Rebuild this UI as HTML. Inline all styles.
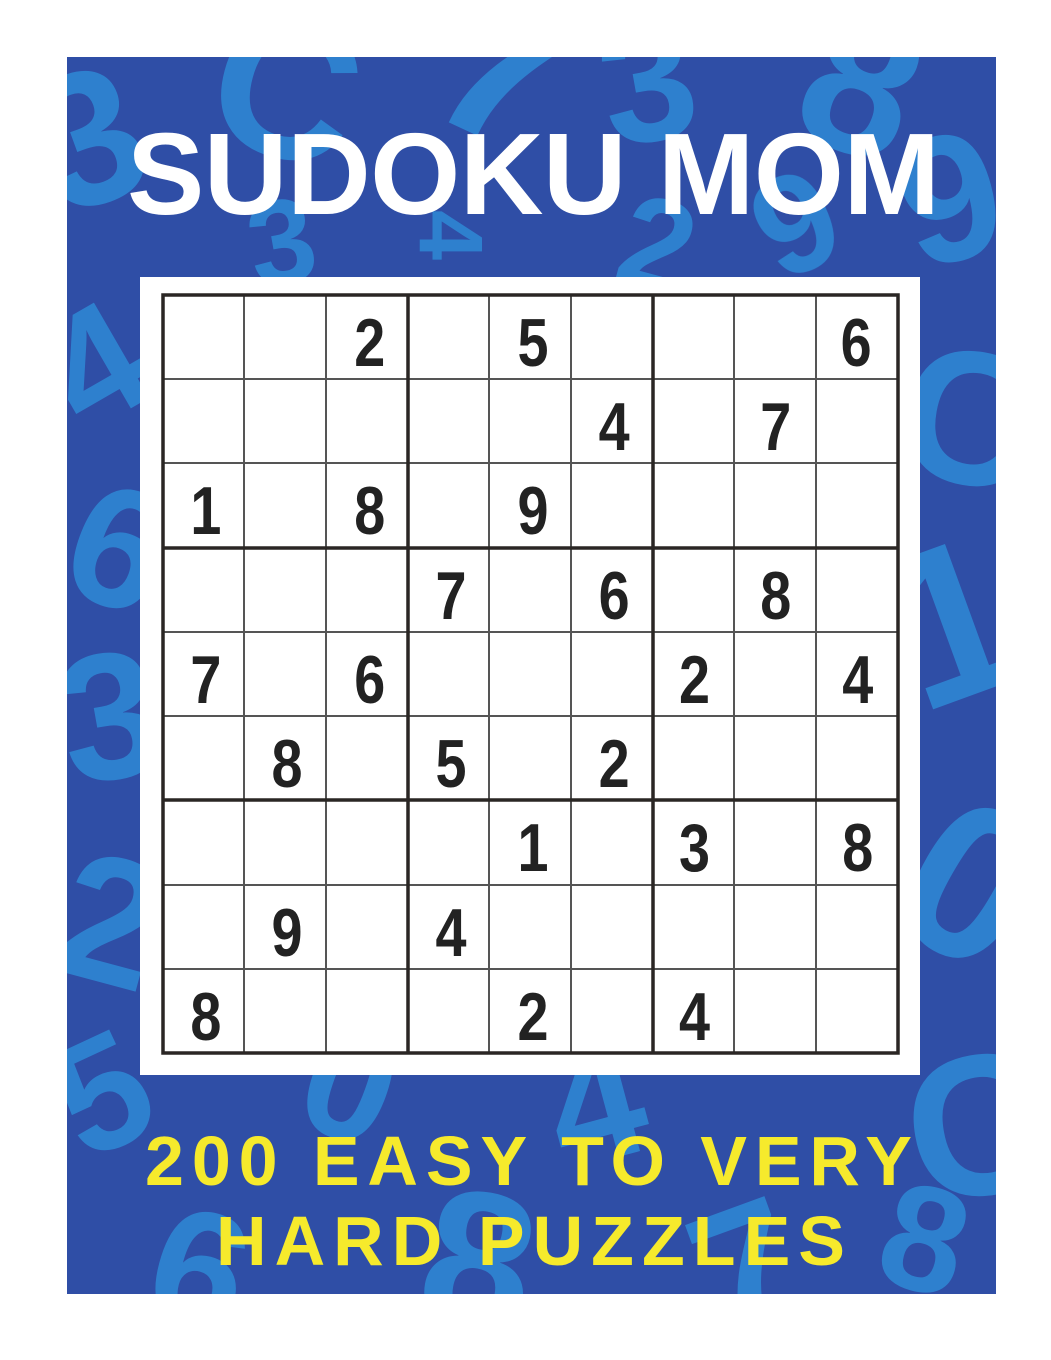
<!DOCTYPE html>
<html><head><meta charset="utf-8"><style>
html,body{margin:0;padding:0;background:#fff;width:1051px;height:1360px;overflow:hidden}
svg{display:block}
</style></head><body>
<svg width="1051" height="1360" viewBox="0 0 1051 1360" xmlns="http://www.w3.org/2000/svg">
<defs><clipPath id="c"><rect x="67" y="57" width="929" height="1237"/></clipPath></defs>
<rect x="67" y="57" width="929" height="1237" fill="#2f4ea6"/>
<g clip-path="url(#c)" font-family="Liberation Sans, sans-serif" font-weight="bold" fill="#2f8ad6" opacity="0.85">
<text x="40" y="200" font-size="190" transform="rotate(-20 100 150)">3</text>
<text x="210" y="150" font-size="200" transform="rotate(15 260 100)">C</text>
<text x="440" y="140" font-size="220" transform="rotate(25 500 80)">7</text>
<text x="600" y="140" font-size="170" transform="rotate(-10 650 80)">3</text>
<text x="800" y="150" font-size="200" transform="rotate(20 850 100)">8</text>
<text x="900" y="260" font-size="180" transform="rotate(-15 950 200)">9</text>
<text x="60" y="420" font-size="160" transform="rotate(-30 100 380)">4</text>
<text x="70" y="600" font-size="170" transform="rotate(20 100 550)">6</text>
<text x="60" y="780" font-size="180" transform="rotate(-10 100 720)">3</text>
<text x="60" y="980" font-size="180" transform="rotate(15 100 920)">2</text>
<text x="60" y="1150" font-size="160" transform="rotate(-25 100 1100)">5</text>
<text x="900" y="480" font-size="190" transform="rotate(10 950 420)">C</text>
<text x="900" y="700" font-size="220" transform="rotate(-20 950 650)">1</text>
<text x="900" y="950" font-size="220" transform="rotate(30 950 900)">0</text>
<text x="910" y="1200" font-size="200" transform="rotate(-10 950 1150)">C</text>
<text x="300" y="1140" font-size="160" transform="rotate(20 350 1100)">0</text>
<text x="550" y="1160" font-size="170" transform="rotate(-15 600 1110)">4</text>
<text x="420" y="1330" font-size="200" transform="rotate(10 470 1280)">8</text>
<text x="700" y="1330" font-size="180" transform="rotate(-20 750 1280)">7</text>
<text x="150" y="1330" font-size="170" transform="rotate(15 200 1280)">6</text>
<text x="250" y="280" font-size="120" transform="rotate(-10 300 250)">3</text>
<text x="420" y="270" font-size="90" transform="rotate(90 450 240)">4</text>
<text x="620" y="290" font-size="130" transform="rotate(15 660 250)">2</text>
<text x="760" y="270" font-size="140" transform="rotate(-25 800 230)">9</text>
<text x="880" y="1290" font-size="150" transform="rotate(15 920 1250)">8</text>
</g>
<text x="127" y="214" font-family="Liberation Sans, sans-serif" font-weight="bold" font-size="116" fill="#fff" textLength="813" lengthAdjust="spacing">SUDOKU MOM</text>
<rect x="140" y="277" width="780" height="798" fill="#fff"/>
<g stroke="#555" stroke-width="2">
<line x1="244" y1="295" x2="244" y2="1053"/><line x1="326" y1="295" x2="326" y2="1053"/>
<line x1="489" y1="295" x2="489" y2="1053"/><line x1="571" y1="295" x2="571" y2="1053"/>
<line x1="734" y1="295" x2="734" y2="1053"/><line x1="816" y1="295" x2="816" y2="1053"/>
<line x1="163" y1="379" x2="898" y2="379"/><line x1="163" y1="463" x2="898" y2="463"/>
<line x1="163" y1="632" x2="898" y2="632"/><line x1="163" y1="716" x2="898" y2="716"/>
<line x1="163" y1="885" x2="898" y2="885"/>
<line x1="163" y1="969" x2="898" y2="969"/>
</g>
<g stroke="#2a2624" stroke-width="3.5" fill="none">
<rect x="163" y="295" width="735" height="758"/>
<line x1="408" y1="295" x2="408" y2="1053"/><line x1="653" y1="295" x2="653" y2="1053"/>
<line x1="163" y1="548" x2="898" y2="548"/><line x1="163" y1="800" x2="898" y2="800"/>
</g>
<g font-family="Liberation Sans, sans-serif" font-weight="bold" font-size="68" fill="#222" text-anchor="middle">
<g transform="scale(0.82 1)">
<text x="451" y="366">2</text><text x="650" y="366">5</text><text x="1044" y="366">6</text>
<text x="749" y="450">4</text><text x="946" y="450">7</text>
<text x="251" y="534">1</text><text x="451" y="534">8</text><text x="650" y="534">9</text>
<text x="550" y="619">7</text><text x="749" y="619">6</text><text x="946" y="619">8</text>
<text x="251" y="703">7</text><text x="451" y="703">6</text><text x="847" y="703">2</text><text x="1046" y="703">4</text>
<text x="350" y="787">8</text><text x="550" y="787">5</text><text x="749" y="787">2</text>
<text x="650" y="871">1</text><text x="847" y="871">3</text><text x="1046" y="871">8</text>
<text x="350" y="956">9</text><text x="550" y="956">4</text>
<text x="251" y="1040">8</text><text x="650" y="1040">2</text><text x="847" y="1040">4</text>
</g></g>
<g font-family="Liberation Sans, sans-serif" font-weight="bold" font-size="70" fill="#f6ea2c">
<text x="145" y="1185" textLength="767" lengthAdjust="spacing">200 EASY TO VERY</text>
<text x="216" y="1265" textLength="629" lengthAdjust="spacing">HARD PUZZLES</text>
</g>
</svg>
</body></html>
